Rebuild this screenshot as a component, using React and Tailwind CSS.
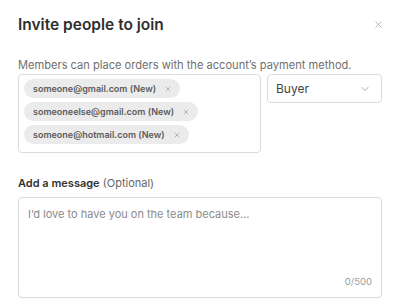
import React, { useState } from "react";
import { X, ChevronDown } from "lucide-react";

const emails = ["someone@gmail.com", "someoneelse@gmail.com", "someone@hotmail.com"];

const App = () => {
  const [message, setMessage] = useState("");

  return (
    <div className="w-[400px] h-[303px] bg-white px-[18px] pt-[13px] font-['Inter',sans-serif] text-[#333]">
      <div className="flex items-center justify-between h-[24px]">
        <h1 className="text-[15.5px] font-semibold text-[#2e2e2e]">Invite people to join</h1>
        <button className="text-[#9a9a9a] mr-[-2px] mt-[-2px]">
          <X size={11} strokeWidth={1.5} />
        </button>
      </div>

      <p className="mt-[20px] text-[11.1px] leading-[16px] text-[#6f6f6f]">
        Members can place orders with the account’s payment method.
      </p>

      <div className="mt-[1px] flex gap-[6px]">
        <div className="w-[243px] h-[79px] border border-[#dcdcdc] rounded-[4px] px-[5px] pt-[4px] flex flex-col items-start gap-[4px]">
          {emails.map((e) => (
            <span key={e} className="h-[19px] flex items-center gap-[8px] bg-[#ebebeb] rounded-full pl-[9px] pr-[8px] text-[9px] font-semibold text-[#5b5b5b]">
              {e} (New)
              <X size={8} strokeWidth={2} className="text-[#9a9a9a]" />
            </span>
          ))}
        </div>
        <div className="w-[115px] h-[29px] border border-[#dcdcdc] rounded-[4px] flex items-center justify-between pl-[8px] pr-[10px] text-[12px] text-[#444]">
          Buyer
          <ChevronDown size={12} strokeWidth={1.5} className="text-[#8a8a8a]" />
        </div>
      </div>

      <div className="mt-[22px] text-[11px] leading-[16px]">
        <span className="font-semibold text-[#333]">Add a message</span>{" "}
        <span className="text-[#666]">(Optional)</span>
      </div>

      <div className="relative mt-[6px] h-[101px] border border-[#dcdcdc] rounded-[4px]">
        <textarea
          value={message}
          onChange={(e) => setMessage(e.target.value)}
          placeholder="I’d love to have you on the team because..."
          className="w-full h-full resize-none outline-none px-[9px] pt-[8px] text-[11px] leading-[16px] text-[#333] placeholder:text-[#8a8a8a] bg-transparent"
        />
        <span className="absolute right-[9px] bottom-[8px] text-[9.5px] text-[#9a9a9a]">{message.length}/500</span>
      </div>
    </div>
  );
};

export default App;
